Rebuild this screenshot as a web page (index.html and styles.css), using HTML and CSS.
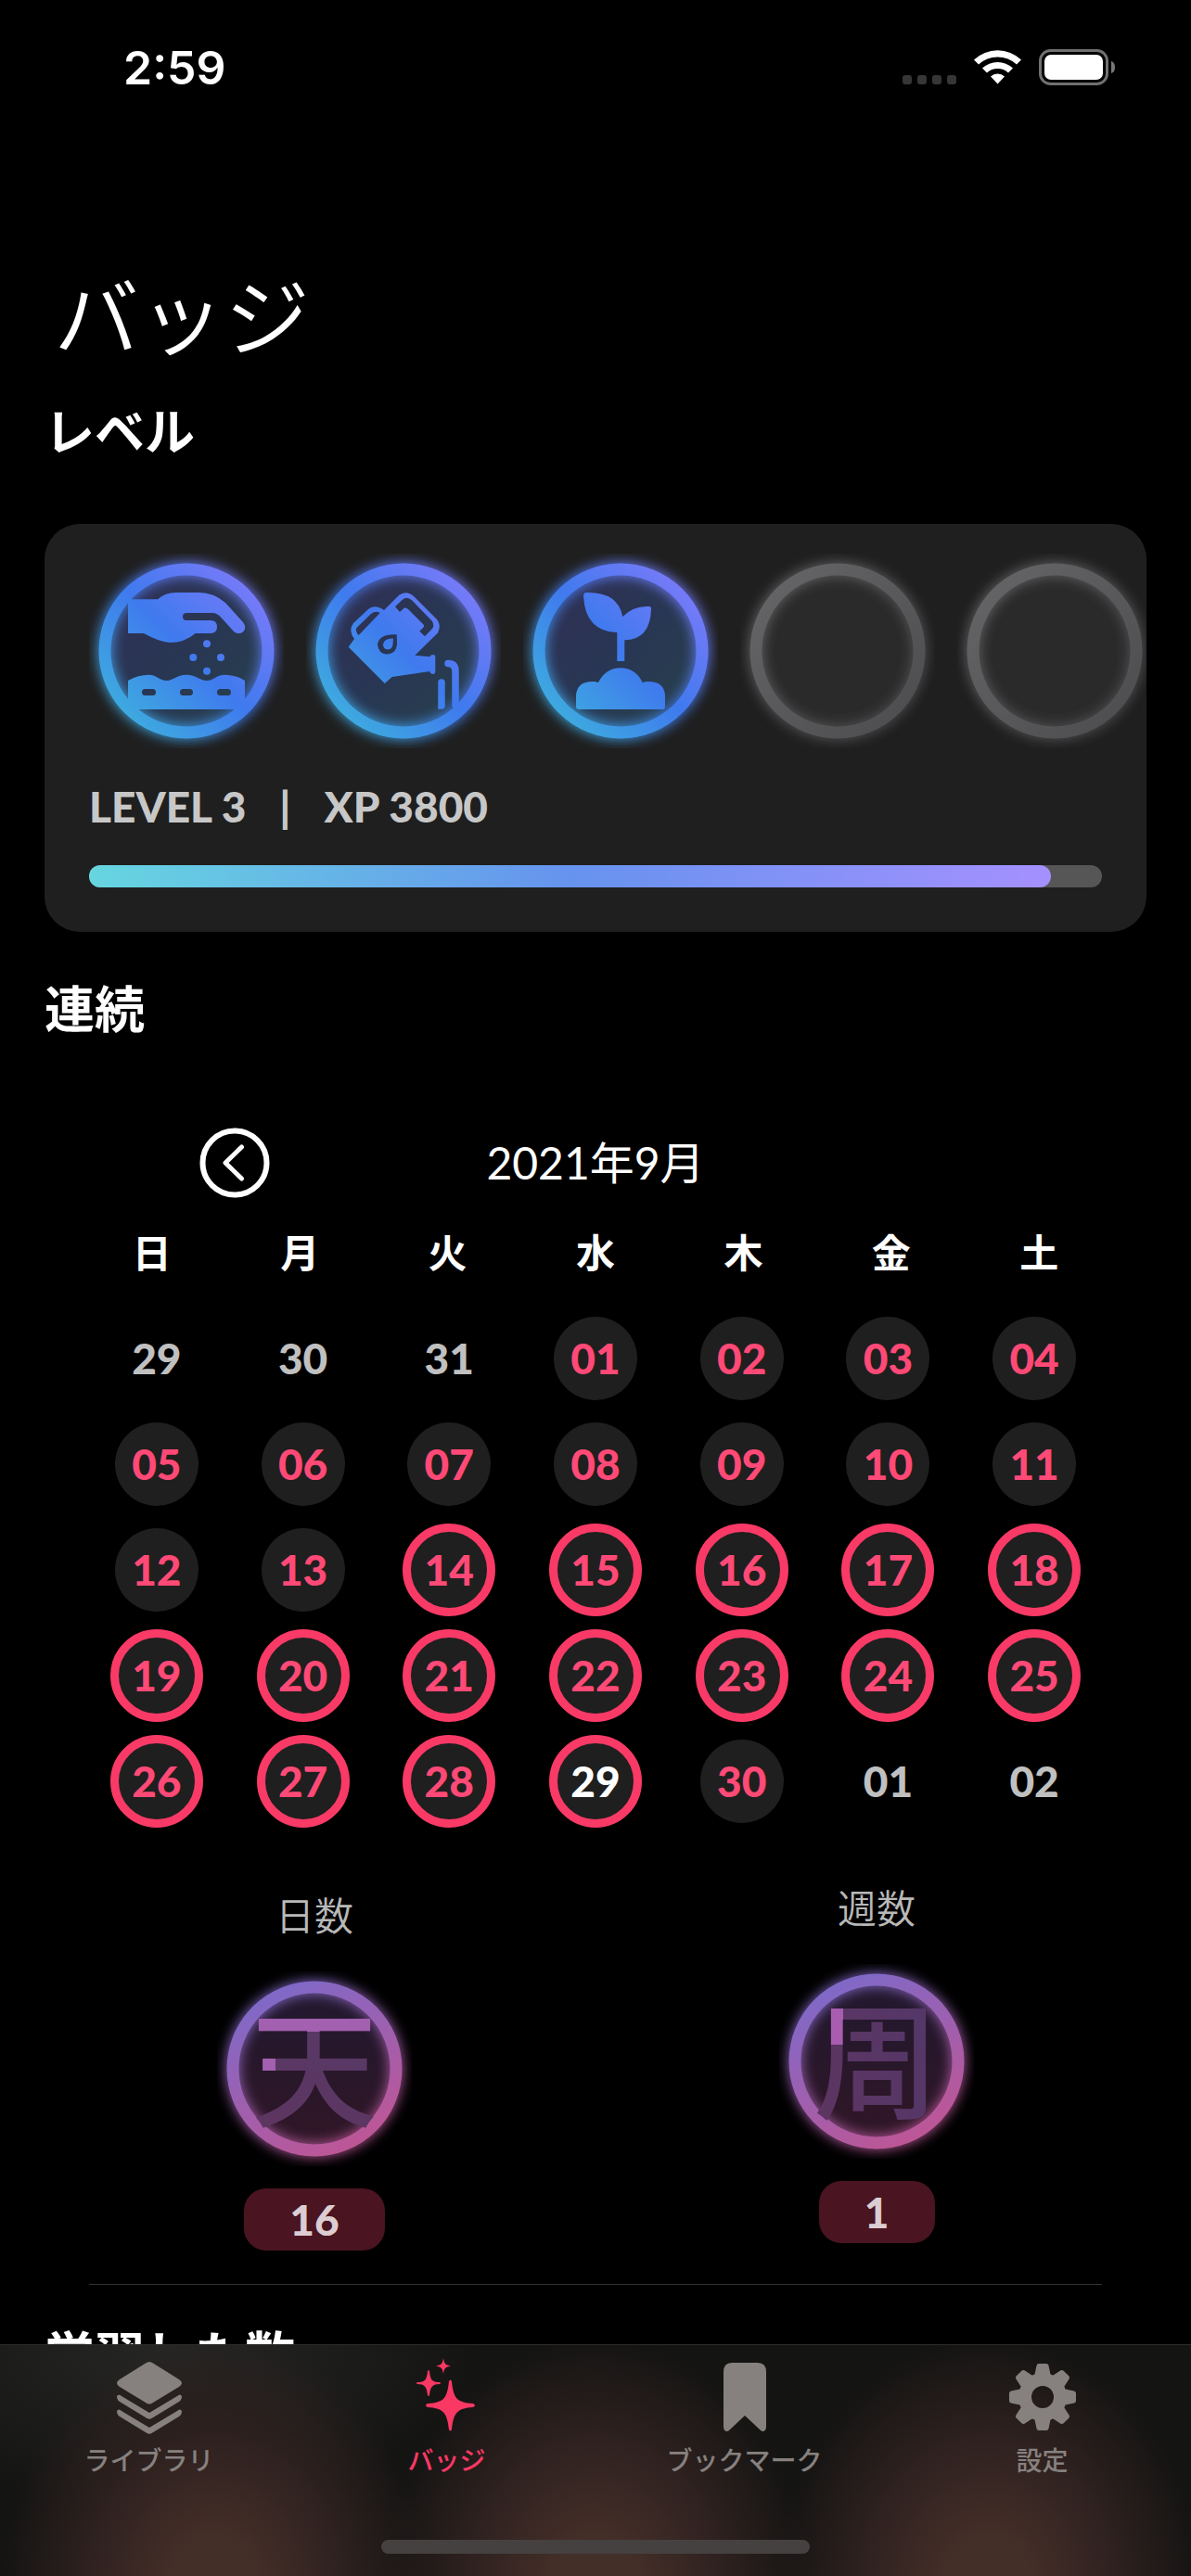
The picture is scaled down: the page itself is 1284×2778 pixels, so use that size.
FILE: index.html
```html
<!DOCTYPE html>
<html lang="ja">
<head>
<meta charset="utf-8">
<meta name="viewport" content="width=device-width, initial-scale=1">
<title>バッジ</title>
<link rel="stylesheet" href="styles.css">
</head>
<body>
<svg class="defs" aria-hidden="true">
  <defs>
    <linearGradient id="blue" gradientUnits="userSpaceOnUse" x1="38" y1="172" x2="172" y2="38">
      <stop offset="0" stop-color="#3ea9df"/><stop offset=".5" stop-color="#3f7aee"/><stop offset="1" stop-color="#757af8"/>
    </linearGradient>
    <linearGradient id="blue-fill" x1="0" y1="0" x2="1" y2="1">
      <stop offset=".1" stop-color="#303055"/><stop offset=".5" stop-color="#283653"/><stop offset=".9" stop-color="#28404e"/>
    </linearGradient>
    <linearGradient id="grey" gradientUnits="userSpaceOnUse" x1="38" y1="38" x2="172" y2="172">
      <stop offset="0" stop-color="#636365"/><stop offset="1" stop-color="#4f4f51"/>
    </linearGradient>
    <linearGradient id="pink" gradientUnits="userSpaceOnUse" x1="60" y1="20" x2="150" y2="190">
      <stop offset="0" stop-color="#7f69c8"/><stop offset="1" stop-color="#be5695"/>
    </linearGradient>
    <linearGradient id="pink-fill" x1="0" y1="0" x2="0" y2="1">
      <stop offset="0" stop-color="#21182f"/><stop offset="1" stop-color="#301626"/>
    </linearGradient>
    <filter id="glow" x="-20%" y="-20%" width="140%" height="140%"><feGaussianBlur stdDeviation="7"/></filter>
    <g id="badge-blue">
      <circle cx="105" cy="105" r="88" fill="url(#blue-fill)"/>
      <circle cx="105" cy="105" r="88" fill="none" stroke="url(#blue)" stroke-width="15" filter="url(#glow)"/>
      <circle cx="105" cy="105" r="88" fill="none" stroke="url(#blue)" stroke-width="13"/>
    </g>
    <g id="badge-grey">
      <circle cx="105" cy="105" r="88" fill="#2a2a2a"/>
      <circle cx="105" cy="105" r="88" fill="none" stroke="url(#grey)" stroke-width="15" filter="url(#glow)"/>
      <circle cx="105" cy="105" r="88" fill="none" stroke="url(#grey)" stroke-width="13"/>
    </g>
    <g id="badge-pink">
      <circle cx="105" cy="105" r="88" fill="url(#pink-fill)"/>
      <circle cx="105" cy="105" r="88" fill="none" stroke="url(#pink)" stroke-width="14" filter="url(#glow)"/>
      <circle cx="105" cy="105" r="88" fill="none" stroke="url(#pink)" stroke-width="13"/>
    </g>
  </defs>
</svg>

<div class="app">
  <main class="content">
    <div class="status">
      <span class="clock">2:59</span>
      <svg class="indicators" viewBox="0 0 230 40" aria-hidden="true">
        <g fill="#363636"><rect x="0" y="28" width="10" height="10" rx="3"/><rect x="16" y="28" width="10" height="10" rx="3"/><rect x="32" y="28" width="10" height="10" rx="3"/><rect x="48" y="28" width="10" height="10" rx="3"/></g>
        <g fill="#fff"><path d="M77 11.500a37 37 0 0 1 51 0l-5 5a30 30 0 0 0-41 0z"/><path d="M86 20.500a24 24 0 0 1 33 0l-5 5a17 17 0 0 0-23 0z"/><path d="M95 29.500a11 11 0 0 1 15 0l-7.500 8z"/></g>
        <rect x="148.500" y="1.500" width="72" height="36" rx="11" fill="none" stroke="#707070" stroke-width="3"/>
        <rect x="153" y="6" width="63" height="27" rx="7" fill="#fff"/>
        <path d="M225 13q4 1 4 6.500t-4 6.500z" fill="#777"/>
      </svg>
    </div>

    <h1 class="title">バッジ</h1>

    <h2 class="section-title">レベル</h2>
    <section class="card">
      <div class="badges">
        <svg class="badge" viewBox="0 0 210 210" role="img" aria-label="レベル1">
          <use href="#badge-blue"/>
          <path fill="url(#blue)" fill-rule="evenodd" d="M42 49.300H74Q82 42 94 42H119Q134 42 147 53L166 74Q169 78 168 81Q167 86 161 86Q158 86 156 84L142 68.500Q138 64 133 64H105A4 4 0 0 0 105 72H131Q138 72 138 79Q138 86 131 86H114.700Q103 96 87.300 96Q75 95 59 86H42Z"/>
          <g fill="url(#blue)"><circle cx="127" cy="97.300" r="4"/><circle cx="112.300" cy="112" r="4"/><circle cx="142" cy="112" r="4"/><circle cx="127" cy="126.700" r="4"/></g>
          <path fill="url(#blue)" fill-rule="evenodd" d="M42 137Q53 130.700 64 130.700C74 131 76 137 83.500 137S94 130.700 105 130.700S119 137 127 137S136 130.700 147 130.700Q159 131 168 137V168H42ZM60.500 146A3.500 3.500 0 0 0 60.500 153H68.500A3.500 3.500 0 0 0 68.500 146ZM101.500 146A3.500 3.500 0 0 0 101.500 153H108.500A3.500 3.500 0 0 0 108.500 146ZM141.500 146A3.500 3.500 0 0 0 141.500 153H149.500A3.500 3.500 0 0 0 149.500 146Z"/>
        </svg>
        <svg class="badge" viewBox="0 0 210 210" role="img" aria-label="レベル2">
          <use href="#badge-blue"/>
          <path fill="url(#blue)" fill-rule="evenodd" d="M45.700 100.700L52 92Q45 83 51 75L67 60Q74 54 84 61L100 45Q108 39 116 46L141 71Q146 77 142 85.500L117.300 109.700L133.500 111.300Q134 109 137 109Q139 109 139.300 111V127Q139 130 137 130Q134 130 133.300 127L92.700 133L84.700 140ZM79.700 64Q75 61 70 65L55 79.500Q52 83 56.700 88ZM96 57.300L101 63L106 58.500Q108 58 110 60L126.500 76.500Q127.500 78 127 79L122.300 83.700L128 89.300L136 81Q138.500 78 136 73L114 50.300Q108 45 103 50.500ZM97.700 87.300Q79 86 77 98Q78 108 87 108.500Q98 108 98 96Z"/>
          <path fill="url(#blue)" d="M94 91.500Q84 91 83 98Q83 103 88 103.500Q93 103 93.500 98Z"/>
          <path fill="none" stroke="url(#blue)" stroke-width="7.500" stroke-linecap="round" d="M153 118.500Q161 118.500 161 127V163M146 139V164L146.100 164"/>
        </svg>
        <svg class="badge" viewBox="0 0 210 210" role="img" aria-label="レベル3">
          <use href="#badge-blue"/>
          <path fill="url(#blue)" d="M65 46Q65 42 68 42Q102 41 107.300 68Q119 56 136 57Q138 57 138 60Q137 93 109.300 93.300V116H101.300V85Q67 84 65 46ZM57 165V153Q58 137 77 138L81 139Q89 123.300 105 123.300T128.700 139L133 138Q152 137 153 153V165Q153 168 150 168H60Q57 168 57 165Z"/>
        </svg>
        <svg class="badge" viewBox="0 0 210 210" role="img" aria-label="レベル4"><use href="#badge-grey"/></svg>
        <svg class="badge" viewBox="0 0 210 210" role="img" aria-label="レベル5"><use href="#badge-grey"/></svg>
      </div>
      <p class="level"><span>LEVEL 3</span><span>|</span><span>XP 3800</span></p>
      <div class="progress" role="progressbar" aria-label="XP" aria-valuenow="95" aria-valuemin="0" aria-valuemax="100"><div class="progress-fill" style="width:95%"></div></div>
    </section>

    <h2 class="section-title">連続</h2>
    <section class="calendar">
      <div class="month">
        <button class="prev" type="button" aria-label="前の月">
          <svg viewBox="0 0 76 76" aria-hidden="true"><circle cx="38" cy="38" r="34.500"/><path d="M45.500 21L28 38L45.500 55"/></svg>
        </button>
        <h3 class="month-name">2021年9月</h3>
      </div>
      <table class="days">
        <thead><tr><th>日</th><th>月</th><th>火</th><th>水</th><th>木</th><th>金</th><th>土</th></tr></thead>
        <tbody>
          <tr><td><span class="day">29</span></td><td><span class="day">30</span></td><td><span class="day">31</span></td><td><span class="day in">01</span></td><td><span class="day in">02</span></td><td><span class="day in">03</span></td><td><span class="day in">04</span></td></tr>
          <tr><td><span class="day in">05</span></td><td><span class="day in">06</span></td><td><span class="day in">07</span></td><td><span class="day in">08</span></td><td><span class="day in">09</span></td><td><span class="day in">10</span></td><td><span class="day in">11</span></td></tr>
          <tr><td><span class="day in">12</span></td><td><span class="day in">13</span></td><td><span class="day in done">14</span></td><td><span class="day in done">15</span></td><td><span class="day in done">16</span></td><td><span class="day in done">17</span></td><td><span class="day in done">18</span></td></tr>
          <tr><td><span class="day in done">19</span></td><td><span class="day in done">20</span></td><td><span class="day in done">21</span></td><td><span class="day in done">22</span></td><td><span class="day in done">23</span></td><td><span class="day in done">24</span></td><td><span class="day in done">25</span></td></tr>
          <tr><td><span class="day in done">26</span></td><td><span class="day in done">27</span></td><td><span class="day in done">28</span></td><td><span class="day in done today">29</span></td><td><span class="day in">30</span></td><td><span class="day">01</span></td><td><span class="day">02</span></td></tr>
        </tbody>
      </table>
    </section>

    <section class="stats">
      <div class="stat stat-days">
        <h3 class="stat-name">日数</h3>
        <div class="medal">
          <svg class="badge" viewBox="0 0 210 210" aria-hidden="true"><use href="#badge-pink"/></svg>
          <span class="kanji kanji-ten">天</span>
        </div>
        <span class="count">16</span>
      </div>
      <div class="stat">
        <h3 class="stat-name">週数</h3>
        <div class="medal">
          <svg class="badge" viewBox="0 0 210 210" aria-hidden="true"><use href="#badge-pink"/></svg>
          <span class="kanji kanji-shu">周</span>
        </div>
        <span class="count">1</span>
      </div>
    </section>

    <hr class="divider">
    <h2 class="section-title">学習した数</h2>
  </main>

  <nav class="tabbar">
    <div class="tabs">
      <a class="tab" href="#library">
        <svg viewBox="0 0 84 84" aria-hidden="true"><path fill="currentColor" d="M38 5.500Q42 2.500 46 5.500L74 23Q80 27 74 31L46 48Q42 51 38 48L10 31Q4 27 10 23Z"/><path fill="currentColor" d="M7 41Q9 38 12 41L42 59L72 41Q75 38 77 41Q77 45 74 47L44.500 65Q42 66.500 39.500 65L10 47Q7 45 7 41ZM7 57Q9 54 12 57L42 75L72 57Q75 54 77 57Q77 61 74 63L44.500 81Q42 82.500 39.500 81L10 63Q7 61 7 57Z"/></svg>
        <span>ライブラリ</span>
      </a>
      <a class="tab active" href="#badges" aria-current="page">
        <svg viewBox="0 0 84 84" aria-hidden="true"><path fill="currentColor" d="M44 25Q45.500 22 47 25C49 43 52 48 70 49Q74 51 70 53C52 54 49 60 47 77Q45.500 80 44 77C42 60 39 54 21 53Q17 51 21 49C39 48 42 43 44 25ZM21 14Q22 12 23 14C24 24 26 26 34 26Q36 27 34 28C26 28 24 31 23 40Q22 42 21 40C20 31 18 28 10 28Q8 27 10 26C18 26 20 24 21 14ZM38 0C39 6 40 7.500 46 8.500C40 9.500 39 11 38 17C37 11 36 9.500 30 8.500C36 7.500 37 6 38 0Z"/></svg>
        <span>バッジ</span>
      </a>
      <a class="tab" href="#bookmarks">
        <svg viewBox="0 0 84 84" aria-hidden="true"><path fill="currentColor" d="M19 15Q19 5 28 5H56Q65 5 65 15V74Q65 79 61 79Q60 79 58 77L42 62L26 77Q24 79 23 79Q19 79 19 74Z"/></svg>
        <span>ブックマーク</span>
      </a>
      <a class="tab" href="#settings">
        <svg viewBox="0 0 84 84" aria-hidden="true"><g fill="currentColor"><path fill-rule="evenodd" d="M42 16A26 26 0 1 0 42 68A26 26 0 1 0 42 16ZM42 30A12 12 0 1 1 42 54A12 12 0 1 1 42 30Z"/><path id="tooth" d="M33 20L35.500 8Q36 6 38 6H46Q48 6 48.500 8L51 20Z"/><use href="#tooth" transform="rotate(45 42 42)"/><use href="#tooth" transform="rotate(90 42 42)"/><use href="#tooth" transform="rotate(135 42 42)"/><use href="#tooth" transform="rotate(180 42 42)"/><use href="#tooth" transform="rotate(225 42 42)"/><use href="#tooth" transform="rotate(270 42 42)"/><use href="#tooth" transform="rotate(315 42 42)"/></g></svg>
        <span>設定</span>
      </a>
    </div>
    <div class="home-indicator"></div>
  </nav>
</div>
</body>
</html>
```

FILE: styles.css
```css
* {
  box-sizing: border-box;
  margin: 0;
  padding: 0;
}

body {
  background: #000;
  color: #fff;
  font-family: Lato, "Noto Sans CJK JP", sans-serif;
}

.defs {
  position: absolute;
  width: 0;
  height: 0;
}

.app {
  display: flex;
  flex-direction: column;
  height: 100vh;
}

.content {
  flex: 1;
  min-height: 0;
  overflow-x: hidden;
  overflow-y: auto;
  scrollbar-width: none;
}

/* Status bar */
.status {
  display: flex;
  justify-content: space-between;
  align-items: center;
  height: 146px;
  padding: 0 81px 0 133px;
}

.clock {
  font: 600 50px/60px Inter, sans-serif;
}

.indicators {
  width: 230px;
  height: 40px;
}

/* Headings */
.title {
  margin: 136px 0 28px 58px;
  font-size: 92px;
  line-height: 120px;
  font-weight: 350;
}

.section-title {
  margin: 0 48px;
  font-size: 54px;
  line-height: 72px;
  font-weight: 700;
}

/* Level card */
.card {
  margin: 63px 48px 48px;
  padding: 32px 0 48px;
  border-radius: 38px;
  background: #1f1f1f;
  overflow: hidden;
}

.badges {
  display: flex;
  gap: 24px;
  padding-left: 48px;
  overflow: hidden;
}

.badge {
  flex: none;
  width: 210px;
  height: 210px;
}

.level {
  display: flex;
  gap: 36px;
  margin: 33px 48px;
  color: #c7c7c7;
  font-size: 46px;
  line-height: 60px;
  font-weight: 900;
}

.progress {
  height: 24px;
  margin: 0 48px;
  border-radius: 12px;
  background: #565657;
}

.progress-fill {
  height: 100%;
  border-radius: 12px;
  background: linear-gradient(90deg, #66d6e0, #6693ee 50%, #a590ff);
}

/* Calendar */
.calendar {
  margin: 91px 84px 50px;
}

.month {
  display: grid;
  grid-template-columns: 131px 1fr 131px;
  align-items: center;
}

.prev {
  justify-self: end;
  width: 76px;
  height: 76px;
  margin-right: -76px;
  border: 0;
  background: none;
}

.prev svg {
  display: block;
  fill: none;
  stroke: #fff;
  stroke-width: 6px;
  stroke-linecap: round;
  stroke-linejoin: round;
}

.prev path {
  stroke-width: 5px;
}

.month-name {
  grid-column: 2;
  text-align: center;
  font-size: 48px;
  line-height: 76px;
  font-weight: 400;
}

.days,
.days thead,
.days tbody {
  display: block;
}

.days tr {
  display: grid;
  grid-template-columns: repeat(7, 1fr);
}

.days thead {
  padding: 29px 0 27px;
}

.days th {
  font-size: 42px;
  line-height: 60px;
  font-weight: 700;
}

.days tbody {
  padding: 0 6px;
}

.days td {
  display: grid;
  place-items: center;
  height: 114px;
}

.day {
  display: grid;
  place-items: center;
  width: 90px;
  height: 90px;
  border-radius: 50%;
  color: #c0c0c0;
  font-size: 46px;
  line-height: 60px;
  font-weight: 900;
}

.day.in {
  background: #1f1f1f;
  color: #ff4976;
}

.day.done {
  width: 100px;
  height: 100px;
  border: 9px solid #f93a66;
}

.day.today {
  color: #fff;
}

/* Streak stats */
.stats {
  display: grid;
  grid-template-columns: 1fr 1fr;
  gap: 60px;
  margin: 0 66px 36px;
}

.stat {
  display: flex;
  flex-direction: column;
  align-items: center;
}

.stat-days {
  padding-top: 8px;
}

.stat-name {
  color: #b8b8b8;
  font-size: 42px;
  line-height: 60px;
  font-weight: 350;
}

.medal {
  display: grid;
  place-items: center;
  margin: 30px 0 24px;
}

.medal > * {
  grid-area: 1 / 1;
}

.kanji {
  z-index: 1;
  font-size: 136px;
  line-height: 136px;
  font-weight: 500;
  color: transparent;
  background-clip: text;
  background-repeat: no-repeat;
}

.kanji-ten {
  background-image: linear-gradient(#a35fb0, #a35fb0), linear-gradient(#a35fb0, #a35fb0), linear-gradient(200deg, #573a68, #5d3560);
  background-size: 100% 28px, 26px 40px, 100% 100%;
  background-position: 0 0, 0 45px, 0 0;
}

.kanji-shu {
  background-image: linear-gradient(#a85db0, #a85db0), linear-gradient(250deg, #53376a, #5d3560);
  background-size: 32px 50px, 100% 100%;
}

.count {
  min-width: 125px;
  padding: 0 49px;
  border-radius: 24px;
  background: #4a1421;
  color: #dccdd2;
  text-align: center;
  font-size: 46px;
  line-height: 67px;
  font-weight: 900;
}

.divider {
  height: 1px;
  margin: 0 96px 40px;
  border: 0;
  background: #333;
}

/* Tab bar */
.tabbar {
  flex: none;
  display: flex;
  flex-direction: column;
  justify-content: space-between;
  align-items: center;
  height: 250px;
  padding: 14px 0 24px;
  border-top: 1px solid #2c2c2c;
  background:
    radial-gradient(ellipse 230px 270px at 18% 105%, #442e28 20%, #2e211f 60%, #2e211f00),
    radial-gradient(ellipse 230px 270px at 50% 105%, #442e28 20%, #2e211f 60%, #2e211f00),
    radial-gradient(ellipse 230px 270px at 83% 105%, #442e28 20%, #2e211f 60%, #2e211f00),
    radial-gradient(ellipse 340px 180px at 14% 0, #262625, #26262500),
    #141413;
}

.tabs {
  display: grid;
  grid-template-columns: repeat(4, 1fr);
  width: 100%;
}

.tab {
  display: flex;
  flex-direction: column;
  align-items: center;
  gap: 6px;
  color: #86817f;
  font-size: 28px;
  line-height: 40px;
  font-weight: 500;
  text-decoration: none;
}

.tab svg {
  width: 84px;
  height: 84px;
}

.tab.active {
  color: #fa3864;
}

.home-indicator {
  width: 36%;
  height: 15px;
  border-radius: 8px;
  background: #454140;
}
```
